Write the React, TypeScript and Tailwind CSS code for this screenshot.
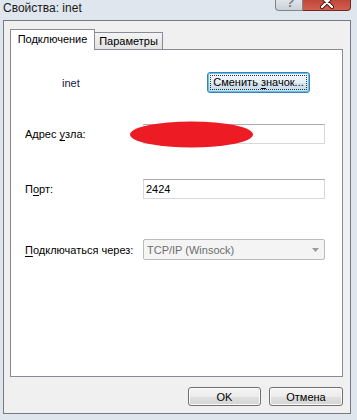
import React from 'react';

const btnBase =
  'flex items-center justify-center rounded-[3px] border border-[#707070] bg-[linear-gradient(to_bottom,#f4f4f4_0%,#ececec_50%,#e0e0e0_50%,#d4d4d4_100%)] shadow-[inset_0_0_0_1px_#fbfbfb] text-[11px] leading-[14px] text-black';

const App = () => {
  return (
    <div className="relative w-[357px] h-[420px] overflow-hidden bg-[#dfe6ed] font-['Liberation_Sans',Arial,sans-serif] text-[11px] leading-[14px] text-black">
      {/* Title bar */}
      <div className="flex h-[20px] justify-between">
        <span className="pl-[3px] pt-[1px] text-[12px] text-[#1a1a1a]">Свойства: inet</span>
        <div className="flex items-start pr-[6px]">
          <div className="relative h-[11px] w-[28px] overflow-hidden rounded-bl-[4px] border border-t-0 border-[#7d8690] bg-[linear-gradient(to_bottom,#dfe4ea,#c9d0d8)]">
            <span className="absolute left-[10px] top-[-5px] text-[14px] font-bold leading-[14px] text-[#7f858d]">?</span>
          </div>
          <div className="relative h-[11px] w-[48px] overflow-hidden rounded-br-[4px] border border-l-0 border-t-0 border-[#6e2a22] bg-[linear-gradient(to_bottom,#c0473a,#d35f4e)]">
            <svg width="48" height="11" className="absolute left-0 top-0">
              <path d="M19 -3 L29 7 M29 -3 L19 7" stroke="#4a1a14" strokeWidth="4" strokeLinecap="round" />
              <path d="M19 -3 L29 7 M29 -3 L19 7" stroke="#ffffff" strokeWidth="2.2" strokeLinecap="round" />
            </svg>
          </div>
        </div>
      </div>

      {/* Dialog client area */}
      <div className="ml-[3px] flex h-[394px] w-[348px] flex-col border border-[#777a7e] bg-[#f0f0f0] pl-[6px] pt-[8px]">
        {/* Tabs */}
        <div className="flex h-[20px] items-end">
          <div className="relative z-10 -mb-[1px] flex h-[21px] w-[85px] justify-center border border-b-0 border-[#898c95] bg-white pt-[2px]">
            Подключение
          </div>
          <div className="flex h-[17px] w-[68px] justify-center border border-b-0 border-l-0 border-[#898c95] bg-[linear-gradient(to_bottom,#f3f3f3,#e3e3e3)] pt-[1px]">
            Параметры
          </div>
        </div>

        {/* Tab panel */}
        <div className="flex h-[328px] w-[333px] flex-col border border-[#898c95] bg-white">
          <div className="mt-[22px] flex h-[21px] items-center">
            <span className="w-[196px] pl-[51px] text-[#15154a]">inet</span>
            <button className="flex h-[21px] w-[103px] items-center justify-center rounded-[3px] border border-[#3c7fb1] bg-[linear-gradient(to_bottom,#f4f8fb_0%,#e6eff6_50%,#d6e4ef_50%,#c8dbe9_100%)] shadow-[inset_0_0_0_1px_#5fc3f0] p-[2px]">
              <span className="block h-full w-full whitespace-nowrap border border-dotted border-[#333] text-center text-[11px] leading-[13px]">
                Сменить <span className="underline underline-offset-2">з</span>начок...
              </span>
            </button>
          </div>

          <div className="mt-[31px] flex h-[20px] items-center">
            <span className="w-[132px] whitespace-nowrap pl-[14px]">
              Адрес <span className="underline underline-offset-2">у</span>зла:
            </span>
            <div className="h-[20px] w-[182px] border border-[#d5d9de] border-t-[#abadb3] bg-white" />
          </div>

          <div className="mt-[35px] flex h-[20px] items-center">
            <span className="w-[132px] whitespace-nowrap pl-[14px]">
              П<span className="underline underline-offset-2">о</span>рт:
            </span>
            <div className="flex h-[20px] w-[182px] items-center border border-[#d5d9de] border-t-[#abadb3] bg-white pl-[2px]">
              2424
            </div>
          </div>

          <div className="mt-[40px] flex h-[21px] items-center">
            <span className="w-[132px] shrink-0 whitespace-nowrap pl-[14px]">
              <span className="underline underline-offset-2">П</span>одключаться через:
            </span>
            <div className="flex h-[21px] w-[182px] items-center justify-between rounded-[2px] border border-[#b8bcc0] bg-[#f4f4f4] pl-[3px] pr-[5px] text-[#6d6d6d]">
              <span>TCP/IP (Winsock)</span>
              <svg width="7" height="4" viewBox="0 0 7 4">
                <path d="M0 0 H7 L3.5 4 Z" fill="#9c9c9c" />
              </svg>
            </div>
          </div>
        </div>

        {/* Buttons */}
        <div className="mt-[10px] flex w-[333px] justify-end gap-[8px]">
          <button className={`${btnBase} h-[19px] w-[73px]`}>OK</button>
          <button className={`${btnBase} h-[19px] w-[74px]`}>Отмена</button>
        </div>
      </div>

      {/* Redaction mark */}
      <svg className="absolute left-[130px] top-[121px]" width="123" height="27">
        <ellipse cx="61.5" cy="13.5" rx="61.5" ry="13" fill="#ed1c24" />
      </svg>
    </div>
  );
};

export default App;
